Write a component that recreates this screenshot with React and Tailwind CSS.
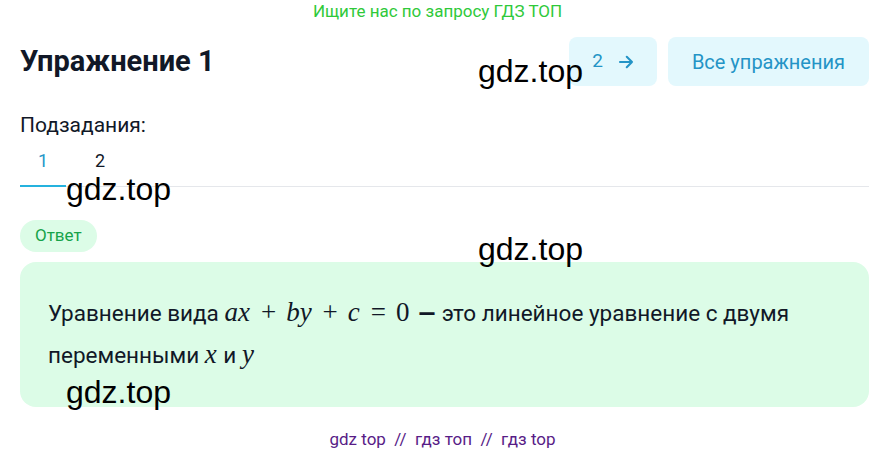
import React from 'react';

const Wm = ({ className }) => (
  <span
    className={`absolute text-[32px] leading-none text-black pointer-events-none ${className}`}
    style={{ fontFamily: '"Liberation Sans", Arial, sans-serif' }}
  >
    gdz.top
  </span>
);

const serif = { fontFamily: '"Liberation Serif", "DejaVu Serif", serif' };

const M = ({ children }) => (
  <span className="italic text-[27px] leading-none pr-[1px]" style={serif}>
    {children}
  </span>
);
const Op = ({ children }) => (
  <span className="mx-[10px] text-[27px] leading-none" style={serif}>
    {children}
  </span>
);

export default function App() {
  return (
    <div
      className="relative w-[885px] h-[454px] bg-white overflow-hidden"
      style={{ fontFamily: 'Roboto, "Noto Sans", sans-serif' }}
    >
      <div className="text-center text-[17px] leading-[22px] text-[#2fc93a] pr-[10px]">
        Ищите нас по запросу ГДЗ ТОП
      </div>

      <div className="flex items-center justify-between pl-[20px] pr-[16px] mt-[15px]">
        <h1 className="text-[29px] font-bold text-[#111827]">Упражнение 1</h1>
        <div className="flex gap-[11px]">
          <button className="flex items-center gap-[14px] h-[49px] pl-[23px] pr-[22px] rounded-[8px] bg-[#e3f8fd] text-[#2494c6] text-[19px]">
            2
            <svg width="18" height="18" viewBox="0 0 24 24" fill="none" stroke="currentColor" strokeWidth="2.8" strokeLinecap="round" strokeLinejoin="round">
              <path d="M4 12h16M13 5l7 7-7 7" />
            </svg>
          </button>
          <button className="h-[49px] px-[24px] rounded-[8px] bg-[#e3f8fd] text-[#2494c6] text-[20px]">
            Все упражнения
          </button>
        </div>
      </div>

      <div className="px-[20px] mt-[26px]">
        <div className="text-[21px] leading-[26px] text-[#111827]">Подзадания:</div>
        <div className="mt-[12px] flex border-b border-[#e5e7eb] w-[849px]">
          <div className="w-[46px] text-center text-[18px] leading-[22px] pb-[13px] text-[#2596c8] border-b-2 border-[#25b2de] -mb-[1px]">1</div>
          <div className="w-[68px] text-center text-[18px] leading-[22px] pb-[13px] text-[#111827]">2</div>
        </div>
        <div className="mt-[33px] inline-flex items-center h-[32px] px-[15px] rounded-full bg-[#dcfce7] text-[#16a34a] text-[17px]">
          Ответ
        </div>
        <div className="mt-[10px] w-[849px] h-[145px] rounded-[16px] bg-[#dcfce7] px-[28px] pt-[30px] text-[22.5px] leading-[42px] text-[#111827]">
          Уравнение вида <M>ax</M><Op>+</Op><M>by</M><Op>+</Op><M>c</M><Op>=</Op><span className="text-[27px] leading-none" style={serif}>0</span>
          <span className="ml-[9px] mr-[1px] font-black text-[22px] leading-none">—</span> это линейное уравнение с двумя переменными <M>x</M> и <M>y</M>
        </div>
      </div>

      <div className="mt-[20px] text-center text-[17px] leading-[24px] text-[#581c87]">
        gdz top &nbsp;//&nbsp; гдз топ &nbsp;//&nbsp; гдз top
      </div>

      <Wm className="left-[478px] top-[55px]" />
      <Wm className="left-[66px] top-[173px]" />
      <Wm className="left-[478px] top-[233px]" />
      <Wm className="left-[66px] top-[376px]" />
    </div>
  );
}
